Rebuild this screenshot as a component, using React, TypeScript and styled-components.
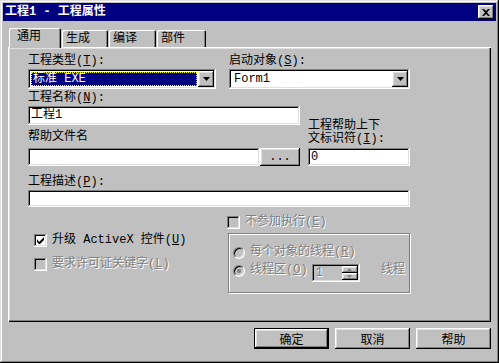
import styled, { createGlobalStyle } from 'styled-components';

const GlobalStyle = createGlobalStyle`
  html, body {
    margin: 0;
    padding: 0;
    background: #c0c0c0;
  }
  body {
    font-family: "Liberation Mono", "Noto Sans CJK SC", monospace;
    font-size: 12px;
    color: #000;
  }
  * {
    box-sizing: border-box;
  }
`;

const raised = `
  box-shadow: inset -1px -1px #000, inset 1px 1px #fff,
    inset -2px -2px #808080, inset 2px 2px #dfdfdf;
`;

const sunken = `
  box-shadow: inset -1px -1px #fff, inset 1px 1px #808080,
    inset -2px -2px #dfdfdf, inset 2px 2px #000;
`;

const Accel = ({ k }: { k: string }) => (
  <>
    (<u>{k}</u>)
  </>
);

const Check = ({ checked, disabled, children }: { checked?: boolean; disabled?: boolean; children: React.ReactNode }) => (
  <StyledCheck>
    <CheckBox $disabled={disabled}>
      {checked && (
        <svg width="7" height="7" viewBox="0 0 7 7">
          <path d="M0 2v3l2 2h1l4-4V0L2 5z" fill="#000" />
        </svg>
      )}
    </CheckBox>
    <Text $disabled={disabled}>{children}</Text>
  </StyledCheck>
);

const Radio = ({ checked, children }: { checked?: boolean; children: React.ReactNode }) => (
  <StyledCheck>
    <RadioCircle>{checked && <RadioDot />}</RadioCircle>
    <Text $disabled>{children}</Text>
  </StyledCheck>
);

const Combo = ({ value, selected, width }: { value: string; selected?: boolean; width: number }) => (
  <StyledCombo style={{ width }}>
    <ComboValue $selected={selected}>{value}</ComboValue>
    <DropButton>
      <svg width="7" height="4" viewBox="0 0 7 4">
        <path d="M0 0h7L3.5 4z" fill="#000" />
      </svg>
    </DropButton>
  </StyledCombo>
);

const App = () => {
  return (
    <>
      <GlobalStyle />
      <Window>
        <TitleBar>
          <span>工程1 - 工程属性</span>
          <CloseButton>
            <svg width="8" height="7" viewBox="0 0 8 7">
              <path d="M0 0h2l2 2 2-2h2L5 3.5 8 7H6L4 5 2 7H0l3-3.5z" fill="#000" />
            </svg>
          </CloseButton>
        </TitleBar>

        <Body>
          <TabRow>
            <Tab $active $width={52}>通用</Tab>
            <Tab $width={46}>生成</Tab>
            <Tab $width={47}>编译</Tab>
            <Tab $width={49}>部件</Tab>
          </TabRow>

          <Panel>
            <ComboRow>
              <Field>
                <Label>工程类型<Accel k="T" />:</Label>
                <Combo value="标准 EXE" selected width={188} />
              </Field>
              <Field>
                <Label>启动对象<Accel k="S" />:</Label>
                <Combo value="Form1" width={181} />
              </Field>
            </ComboRow>

            <NameRow>
              <Field>
                <Label>工程名称<Accel k="N" />:</Label>
                <Input $width={272} $height={19}>工程1</Input>
                <Label $top={5} $bottom={3}>帮助文件名</Label>
                <InputGroup>
                  <Input $width={232} $height={18} />
                  <SmallButton>...</SmallButton>
                </InputGroup>
              </Field>
              <Field>
                <TwoLineLabel>
                  工程帮助上下
                  <br />
                  文标识符<Accel k="I" />:
                </TwoLineLabel>
                <Input $width={102} $height={18}>0</Input>
              </Field>
            </NameRow>

            <Field>
              <Label $top={9}>工程描述<Accel k="P" />:</Label>
              <Input $width={382} $height={17} />
            </Field>

            <OptionsRow>
              <LeftOptions>
                <Check checked>升级 ActiveX 控件<Accel k="U" /></Check>
                <Check disabled>要求许可证关键字<Accel k="L" /></Check>
              </LeftOptions>
              <RightOptions>
                <Check disabled>不参加执行<Accel k="E" /></Check>
                <GroupBox>
                  <Radio>每个对象的线程<Accel k="R" /></Radio>
                  <GroupLine>
                    <Radio checked>线程区<Accel k="O" /></Radio>
                    <Spinner>
                      <SpinValue>1</SpinValue>
                      <SpinButtons>
                        <SpinButton>
                          <svg width="5" height="3" viewBox="0 0 5 3">
                            <path d="M2.5 0L5 3H0z" fill="#808080" />
                          </svg>
                        </SpinButton>
                        <SpinButton>
                          <svg width="5" height="3" viewBox="0 0 5 3">
                            <path d="M0 0h5L2.5 3z" fill="#808080" />
                          </svg>
                        </SpinButton>
                      </SpinButtons>
                    </Spinner>
                    <Text $disabled>线程</Text>
                  </GroupLine>
                </GroupBox>
              </RightOptions>
            </OptionsRow>
          </Panel>

          <ButtonRow>
            <Button $default>确定</Button>
            <Button>取消</Button>
            <Button>帮助</Button>
          </ButtonRow>
        </Body>
      </Window>
    </>
  );
};

/**
 * styles
 */
const Window = styled.div`
  width: 499px;
  height: 363px;
  padding: 3px;
  display: flex;
  flex-direction: column;
  background: #c0c0c0;
  box-shadow: inset -1px -1px #000, inset 1px 1px #dfdfdf,
    inset -2px -2px #808080, inset 2px 2px #fff;
`;

const TitleBar = styled.div`
  height: 18px;
  flex: none;
  display: flex;
  align-items: center;
  justify-content: space-between;
  padding: 0 2px 0 2px;
  background: #000080;
  color: #fff;
  font-weight: bold;
  line-height: 18px;
`;

const CloseButton = styled.div`
  width: 16px;
  height: 14px;
  display: flex;
  align-items: center;
  justify-content: center;
  background: #c0c0c0;
  ${raised}
`;

const Body = styled.div`
  flex: 1;
  display: flex;
  flex-direction: column;
  padding: 7px 5px 11px 5px;
`;

const TabRow = styled.div`
  height: 19px;
  display: flex;
  align-items: flex-end;
  padding-left: 1px;
`;

const Tab = styled.div<{ $active?: boolean; $width: number }>`
  position: relative;
  z-index: ${(p) => (p.$active ? 1 : 0)};
  width: ${(p) => p.$width}px;
  height: ${(p) => (p.$active ? 20 : 17)}px;
  margin-bottom: ${(p) => (p.$active ? -1 : 0)}px;
  margin-left: ${(p) => (p.$active ? 0 : 1)}px;
  padding: ${(p) => (p.$active ? '2px 0 0 8px' : '2px 0 0 4px')};
  background: #c0c0c0;
  border-radius: 2px 2px 0 0;
  line-height: 15px;
  box-shadow: inset 1px 1px #fff, inset -1px 0 #000, inset -2px 0 #808080;
`;

const Panel = styled.div`
  height: 275px;
  flex: none;
  display: flex;
  flex-direction: column;
  padding: 7px 81px 0 20px;
  box-shadow: inset 1px 1px #fff, inset -1px -1px #000,
    inset -2px -2px #808080, inset 2px 2px #dfdfdf;
`;

const Field = styled.div`
  display: flex;
  flex-direction: column;
`;

const Label = styled.div<{ $top?: number; $bottom?: number }>`
  height: 15px;
  line-height: 15px;
  margin-top: ${(p) => p.$top ?? 0}px;
  margin-bottom: ${(p) => p.$bottom ?? 0}px;
  white-space: nowrap;
`;

const TwoLineLabel = styled.div`
  line-height: 13px;
  margin-bottom: 2px;
  white-space: nowrap;
`;

const ComboRow = styled.div`
  display: grid;
  grid-template-columns: 188px 181px;
  gap: 13px;
`;

const StyledCombo = styled.div`
  height: 20px;
  display: flex;
  padding: 2px;
  background: #fff;
  ${sunken}
`;

const ComboValue = styled.div<{ $selected?: boolean }>`
  flex: 1;
  margin: 1px;
  padding-left: 1px;
  line-height: 12px;
  white-space: nowrap;
  color: ${(p) => (p.$selected ? '#fff' : '#000')};
  background: ${(p) => (p.$selected ? '#000080' : 'transparent')};
  border: 1px dotted ${(p) => (p.$selected ? '#ffff00' : 'transparent')};
`;

const DropButton = styled.div`
  width: 16px;
  height: 16px;
  display: flex;
  align-items: center;
  justify-content: center;
  background: #c0c0c0;
  ${raised}
`;

const NameRow = styled.div`
  display: flex;
  align-items: flex-end;
  gap: 8px;
  margin-top: 2px;
`;

const Input = styled.div<{ $width: number; $height: number }>`
  width: ${(p) => p.$width}px;
  height: ${(p) => p.$height}px;
  padding: 2px 3px;
  background: #fff;
  line-height: ${(p) => p.$height - 4}px;
  white-space: nowrap;
  ${sunken}
`;

const InputGroup = styled.div`
  display: flex;
`;

const SmallButton = styled.div`
  width: 40px;
  height: 18px;
  display: flex;
  align-items: center;
  justify-content: center;
  background: #c0c0c0;
  ${raised}
`;

const OptionsRow = styled.div`
  display: grid;
  grid-template-columns: 199px 183px;
`;

const LeftOptions = styled.div`
  display: flex;
  flex-direction: column;
  gap: 11px;
  padding: 27px 0 0 6px;
`;

const RightOptions = styled.div`
  display: flex;
  flex-direction: column;
  gap: 4px;
  padding-top: 9px;
`;

const StyledCheck = styled.div`
  height: 13px;
  display: flex;
  align-items: center;
  gap: 5px;
`;

const CheckBox = styled.div<{ $disabled?: boolean }>`
  width: 13px;
  height: 13px;
  flex: none;
  display: flex;
  align-items: center;
  justify-content: center;
  background: ${(p) => (p.$disabled ? '#c0c0c0' : '#fff')};
  ${sunken}
`;

const Text = styled.span<{ $disabled?: boolean }>`
  line-height: 13px;
  white-space: nowrap;
  color: ${(p) => (p.$disabled ? '#808080' : '#000')};
  text-shadow: ${(p) => (p.$disabled ? '1px 1px 0 #fff' : 'none')};
`;

const RadioCircle = styled.div`
  width: 12px;
  height: 12px;
  flex: none;
  display: flex;
  align-items: center;
  justify-content: center;
  border-radius: 50%;
  border: 1px solid;
  border-color: #808080 #fff #fff #808080;
  box-shadow: inset 1px 1px #000, inset -1px -1px #dfdfdf;
  background: #c0c0c0;
`;

const RadioDot = styled.div`
  width: 4px;
  height: 4px;
  border-radius: 50%;
  background: #808080;
`;

const GroupBox = styled.div`
  width: 182px;
  height: 60px;
  margin-left: 1px;
  display: flex;
  flex-direction: column;
  gap: 5px;
  padding: 12px 4px 0 4px;
  border: 1px solid #808080;
  box-shadow: inset 1px 1px #fff, 1px 1px #fff;
`;

const GroupLine = styled.div`
  display: flex;
  align-items: flex-start;
`;

const Spinner = styled.div`
  width: 51px;
  height: 18px;
  margin: 0 21px 0 4px;
  display: flex;
  padding: 2px;
  ${sunken}
`;

const SpinValue = styled.div`
  flex: 1;
  padding-left: 2px;
  line-height: 14px;
  color: #808080;
  text-shadow: 1px 1px 0 #fff;
`;

const SpinButtons = styled.div`
  width: 16px;
  display: flex;
  flex-direction: column;
`;

const SpinButton = styled.div`
  flex: 1;
  display: flex;
  align-items: center;
  justify-content: center;
  background: #c0c0c0;
  ${raised}
`;

const ButtonRow = styled.div`
  display: flex;
  justify-content: flex-end;
  gap: 6px;
  margin-top: 6px;
`;

const Button = styled.div<{ $default?: boolean }>`
  width: 75px;
  height: 21px;
  display: flex;
  align-items: center;
  justify-content: center;
  background: #c0c0c0;
  ${(p) =>
    p.$default
      ? `box-shadow: inset -1px -1px #000, inset 1px 1px #000,
          inset -2px -2px #000, inset 2px 2px #fff,
          inset -3px -3px #808080, inset 3px 3px #dfdfdf;`
      : raised}
`;

export default App;
